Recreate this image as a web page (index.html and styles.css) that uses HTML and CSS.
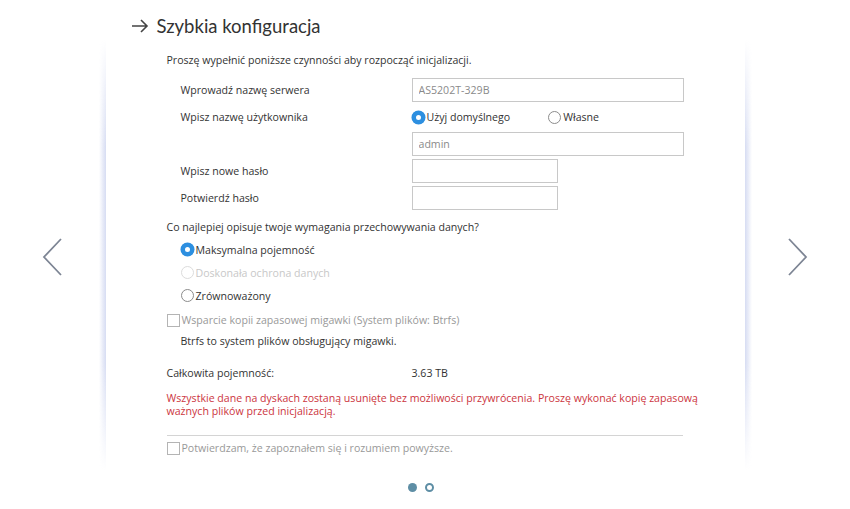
FILE: index.html
```html
<!DOCTYPE html>
<html lang="pl">
<head>
  <meta charset="UTF-8">
  <title>Szybkia konfiguracja</title>
  <link rel="stylesheet" href="styles.css">
</head>
<body>
  <div class="wizard">
    <div class="nav-side">
      <svg class="chevron" width="24" height="40" viewBox="0 0 24 40"><polyline points="20,2 3,20 20,38" /></svg>
    </div>
    <div class="center">
      <h1 class="title">
        <svg class="arrow" width="18" height="14" viewBox="0 0 18 14"><path d="M1 7H16M10 1L16 7L10 13" /></svg>
        Szybkia konfiguracja
      </h1>
      <div class="card">
        <p class="intro">Proszę wypełnić poniższe czynności aby rozpocząć inicjalizacji.</p>
        <div class="form">
          <label class="lbl">Wprowadź nazwę serwera</label>
          <div class="field"><input class="txt wide" type="text" value="AS5202T-329B"></div>

          <label class="lbl">Wpisz nazwę użytkownika</label>
          <div class="field radios">
            <span class="opt"><span class="radio on"></span>Użyj domyślnego</span>
            <span class="opt second"><span class="radio"></span>Własne</span>
          </div>

          <span></span>
          <div class="field"><input class="txt wide" type="text" value="admin"></div>

          <label class="lbl">Wpisz nowe hasło</label>
          <div class="field"><input class="txt narrow" type="password"></div>

          <label class="lbl">Potwierdź hasło</label>
          <div class="field"><input class="txt narrow" type="password"></div>
        </div>

        <p class="question">Co najlepiej opisuje twoje wymagania przechowywania danych?</p>
        <ul class="choices">
          <li class="opt"><span class="radio on"></span>Maksymalna pojemność</li>
          <li class="opt disabled"><span class="radio"></span>Doskonała ochrona danych</li>
          <li class="opt"><span class="radio"></span>Zrównoważony</li>
        </ul>

        <div class="check muted"><span class="box"></span>Wsparcie kopii zapasowej migawki (System plików: Btrfs)</div>
        <p class="hint">Btrfs to system plików obsługujący migawki.</p>

        <div class="total">
          <span class="total-lbl">Całkowita pojemność:</span>
          <span>3.63 TB</span>
        </div>

        <p class="warn">Wszystkie dane na dyskach zostaną usunięte bez możliwości przywrócenia. Proszę wykonać kopię zapasową ważnych plików przed inicjalizacją.</p>
        <hr class="rule">

        <div class="check muted confirm"><span class="box"></span>Potwierdzam, że zapoznałem się i rozumiem powyższe.</div>
      </div>
      <div class="dots">
        <span class="dot active"></span>
        <span class="dot"></span>
      </div>
    </div>
    <div class="nav-side">
      <svg class="chevron" width="24" height="40" viewBox="0 0 24 40"><polyline points="4,2 21,20 4,38" /></svg>
    </div>
  </div>
</body>
</html>
```

FILE: styles.css
```css
body {
  margin: 0;
  background-color: #fff;
  font-family: "Open Sans", "Noto Sans", sans-serif;
  font-size: 10.6px;
  color: #333;
}

.wizard {
  display: flex;
  width: 850px;
  height: 509px;
}

.nav-side {
  width: 106px;
  display: flex;
  align-items: center;
  justify-content: center;
  padding-top: 4px;
}

.chevron polyline {
  fill: none;
  stroke: #7d8594;
  stroke-width: 1.8;
}

.center {
  width: 639px;
  display: flex;
  flex-direction: column;
}

.title {
  display: flex;
  align-items: center;
  margin: 0;
  padding: 15px 0 0 25px;
  height: 36px;
  box-sizing: border-box;
  font-family: "Lato", "Open Sans", sans-serif;
  font-size: 18.5px;
  font-weight: normal;
  line-height: 26px;
  color: #333;
}

.arrow {
  margin-right: 8px;
}

.arrow path {
  fill: none;
  stroke: #444;
  stroke-width: 1.6;
}

.card {
  position: relative;
  margin-top: 14px;
  padding: 0 61px;
  height: 410px;
  background-color: #fff;
}

/* soft side shadows */
.card::before,
.card::after {
  content: '';
  position: absolute;
  top: -10px;
  bottom: -10px;
  width: 7px;
  -webkit-mask-image: linear-gradient(transparent, #000 25%, #000 75%, transparent);
  mask-image: linear-gradient(transparent, #000 25%, #000 75%, transparent);
}

.card::before {
  left: -7px;
  background: linear-gradient(to left, rgba(200, 208, 238, 0.75), rgba(255, 255, 255, 0));
}

.card::after {
  right: -7px;
  background: linear-gradient(to right, rgba(200, 208, 238, 0.75), rgba(255, 255, 255, 0));
}

.intro {
  margin: 0;
  padding-top: 2px;
  line-height: 16px;
}

.form {
  display: grid;
  grid-template-columns: 231px 272px;
  grid-auto-rows: 24px;
  row-gap: 3px;
  margin: 10px 0 0 14px;
}

.lbl {
  display: flex;
  align-items: center;
}

.field {
  display: flex;
  align-items: center;
}

.txt {
  box-sizing: border-box;
  height: 24px;
  border: 1px solid #c8c8c8;
  padding: 0 6px;
  font-family: inherit;
  font-size: 10.6px;
  color: #8a8a8a;
  background-color: #fff;
  outline: none;
}

.wide {
  width: 272px;
}

.narrow {
  width: 146px;
}

.opt {
  display: flex;
  align-items: center;
}

.radios .second {
  margin-left: 38px;
}

.radio {
  box-sizing: border-box;
  width: 13px;
  height: 13px;
  border: 1px solid #8c8c8c;
  border-radius: 50%;
  margin-right: 2px;
  background-color: #fff;
}

.radio.on {
  border: 4px solid #2d8fe0;
  background-color: #fff;
  box-shadow: 0 0 0 0.5px #2d8fe0;
}

.question {
  margin: 6px 0 0;
  line-height: 22px;
}

.choices {
  list-style: none;
  margin: 0;
  padding: 0 0 0 14px;
}

.choices li {
  height: 23px;
}

.disabled {
  color: #c8c8c8;
}

.disabled .radio {
  border-color: #dcdcdc;
}

.check {
  display: flex;
  align-items: center;
  height: 22px;
  margin-top: 2px;
}

.muted {
  color: #999;
}

.box {
  box-sizing: border-box;
  width: 13px;
  height: 13px;
  border: 1px solid #b4b4b4;
  margin-right: 2px;
  background-color: #fff;
}

.hint {
  margin: 0;
  padding-left: 14px;
  line-height: 20px;
}

.total {
  display: flex;
  align-items: center;
  height: 20px;
  margin-top: 12px;
}

.total-lbl {
  width: 245px;
}

.warn {
  margin: 9px 0 0;
  line-height: 13px;
  color: #cc3540;
  width: 535px;
}

.rule {
  width: 516px;
  margin: 17px 0 0;
  border: 0;
  border-top: 1px solid #d4d4d4;
}

.confirm {
  margin-top: 1px;
}

.dots {
  display: flex;
  justify-content: center;
  gap: 8px;
  margin-top: 23px;
  padding-right: 9px;
}

.dot {
  box-sizing: border-box;
  width: 9px;
  height: 9px;
  border-radius: 50%;
  background-color: #5e8ea5;
}

.dot:not(.active) {
  background-color: #fff;
  border: 2px solid #5e8ea5;
}
```
